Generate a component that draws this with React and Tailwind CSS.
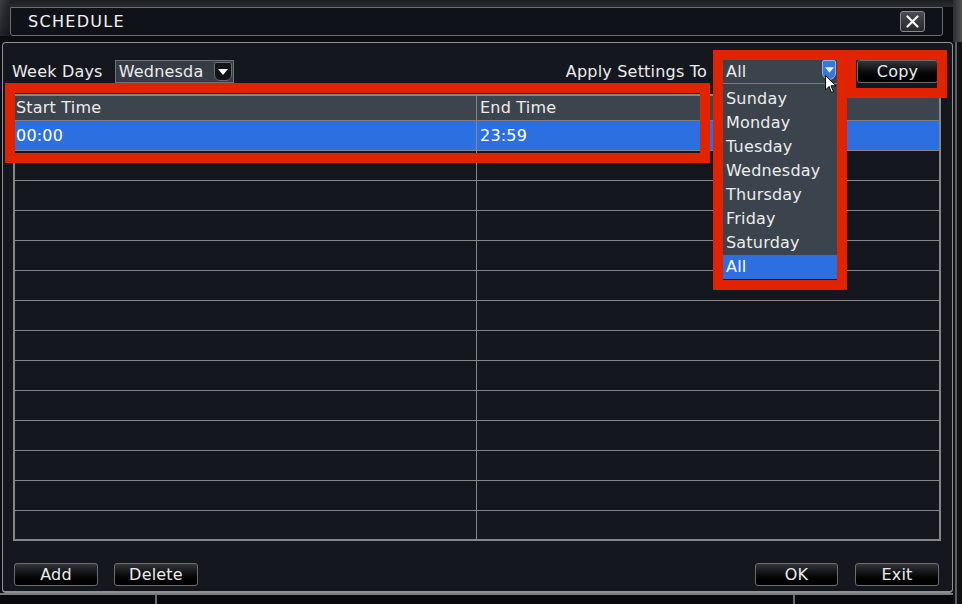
const weekDays = ['Sunday', 'Monday', 'Tuesday', 'Wednesday', 'Thursday', 'Friday', 'Saturday', 'All'];

const emptyRows = Array.from({ length: 13 }, (_, i) => i);

function ArrowDown({ className }) {
  return (
    <svg viewBox="0 0 10 6" className={className}>
      <path d="M0 0 H10 L5 6 Z" fill="currentColor" />
    </svg>
  );
}

function DvrButton({ children, className = '' }) {
  return (
    <button className={`flex h-[23px] items-center justify-center rounded-[3px] border border-[#6b6d70] bg-gradient-to-b from-[#34363a] via-[#0d0e10] to-[#000000] text-[16px] tracking-[0.2px] text-[#ececec] ${className}`}>
      {children}
    </button>
  );
}

function Cursor() {
  return (
    <svg width="12" height="19" viewBox="0 0 12 19" className="absolute left-[825px] top-[75px]">
      <path d="M0.5 0.5 L0.5 15 L4 11.5 L6.5 17.5 L8.5 16.6 L6 10.8 L11 10.8 Z" fill="#ffffff" stroke="#000000" strokeWidth="1" strokeLinejoin="round" />
    </svg>
  );
}

export default function App() {
  return (
    <div className="relative flex h-[604px] w-[962px] overflow-hidden bg-[#0b0c10] font-['DejaVu_Sans',sans-serif] text-[16px] tracking-[0.2px] text-[#ececec]">
      <div className="flex w-[953px] flex-col">
        {/* title */}
        <div className="flex h-[42px] bg-[#0b0c10]">
          <div className="h-[36px] w-[10px] bg-gradient-to-br from-[#3c3f44] via-[#23252a] to-[#16181c]" />
          <div className="flex flex-1 flex-col">
            <div className="h-[7px] bg-gradient-to-b from-[#1c1e22] to-[#2a2c30]" />
            <div className="flex h-[29px] w-[933px] items-center justify-between rounded-b-[3px] border border-[#6a6c70] bg-[#10121a] pl-[17px] pr-[17px]">
              <span className="text-[16px] tracking-[1.3px] text-[#f2f2f2]">SCHEDULE</span>
              <div className="flex h-[21px] w-[25px] items-center justify-center rounded-[3px] border border-[#8a8c90] bg-gradient-to-b from-[#4a4d52] to-[#25272b]">
                <svg width="13" height="13" viewBox="0 0 13 13">
                  <path d="M1.5 1.5 L11.5 11.5 M11.5 1.5 L1.5 11.5" stroke="#f4f4f4" strokeWidth="2.2" strokeLinecap="round" />
                </svg>
              </div>
            </div>
          </div>
        </div>

        {/* panel */}
        <div className="ml-[2px] flex h-[551px] w-[951px] flex-col rounded-[4px] border border-b-2 border-[#8e9094] bg-[#15171f] pl-[10px] pr-[11px] pt-[17px]">
          <div className="flex h-[23px] items-center">
            <span className="-ml-px">Week Days</span>
            <div className="ml-[12px] flex h-[23px] w-[119px] items-center justify-between border border-[#6e7074] bg-[#353c45] pl-[3px] pr-px">
              <span>Wednesda</span>
              <div className="flex h-[19px] w-[18px] items-center justify-center rounded-b-[6px] rounded-t-[2px] border border-[#6a6c70] bg-[#121418]">
                <ArrowDown className="h-[6px] w-[10px] text-white" />
              </div>
            </div>
            <div className="flex-1" />
            <span>Apply Settings To</span>
            <div className="ml-[16px] flex h-[23px] w-[114px] items-center justify-between bg-[#3b444d] pl-[3px] pr-px">
              <span>All</span>
              <div className="flex h-[20px] w-[14px] items-center justify-center self-start rounded-b-[7px] rounded-t-[2px] border border-[#8fb4f2] bg-[#3676e0]">
                <ArrowDown className="h-[6px] w-[9px] text-[#e8f0ff]" />
              </div>
            </div>
            <DvrButton className="ml-[20px] mr-[3px] w-[81px] border-[#3a3c40]">Copy</DvrButton>
          </div>

          {/* table */}
          <div className="mt-[11px] flex flex-col border-2 border-[#868686]">
            <div className="flex h-[25px] border-b border-[#7d7d7d] bg-[#3c444d]">
              <div className="flex w-[462px] items-center border-r border-[#868686] pl-px">Start Time</div>
              <div className="flex flex-1 items-center pl-[3px]">End Time</div>
            </div>
            <div className="flex h-[30px] border-b border-[#868686] bg-[#2b6fe0] text-white">
              <div className="flex w-[462px] items-center border-r border-[#868686] pl-px">00:00</div>
              <div className="flex flex-1 items-center pl-[3px]">23:59</div>
            </div>
            {emptyRows.map((row) => (
              <div key={row} className={`flex ${row === 12 ? 'h-[28px]' : 'h-[30px] border-b border-[#868686]'}`}>
                <div className="w-[462px] border-r border-[#868686]" />
                <div className="flex-1" />
              </div>
            ))}
          </div>

          <div className="mt-[22px] flex items-center">
            <DvrButton className="ml-px w-[84px]">Add</DvrButton>
            <DvrButton className="ml-[16px] w-[84px]">Delete</DvrButton>
            <div className="flex-1" />
            <DvrButton className="w-[83px]">OK</DvrButton>
            <DvrButton className="ml-[17px] mr-[2px] w-[84px]">Exit</DvrButton>
          </div>
        </div>

        {/* bottom scenery */}
        <div className="flex h-[11px] border-t-2 border-[#7a7c80] bg-[#08090c]">
          <div className="ml-[155px] w-[2px] bg-[#6a6c70]" />
          <div className="ml-[636px] w-[2px] bg-[#6a6c70]" />
        </div>
      </div>

      {/* right frame */}
      <div className="flex w-[9px] flex-col">
        <div className="h-[42px] bg-gradient-to-r from-[#2c2e32] to-[#4e5156]" />
        <div className="flex flex-1 bg-[#101216]">
          <div className="ml-[2px] w-[2px] bg-[#5c5f64]" />
        </div>
      </div>

      {/* dropdown list */}
      <div className="absolute left-[723px] top-[83px] w-[114px] border-t border-b border-t-[#5d7fbf] border-b-[#1d2026] bg-[#3b444d] pt-[3px]">
        {weekDays.map((day) => (
          <div key={day} className={`flex h-[24px] items-center pl-[3px] ${day === 'All' ? 'bg-[#2b6fe0] text-white' : ''}`}>{day}</div>
        ))}
      </div>

      <Cursor />

      {/* annotation boxes */}
      <div className="absolute left-[5px] top-[83px] h-[80px] w-[705px] border-[10px] border-[#e22300]" />
      <div className="absolute left-[713px] top-[50px] h-[240px] w-[134px] border-[10px] border-[#e22300]" />
      <div className="absolute left-[846px] top-[50px] h-[48px] w-[101px] border-[10px] border-[#e22300]" />
    </div>
  );
}
